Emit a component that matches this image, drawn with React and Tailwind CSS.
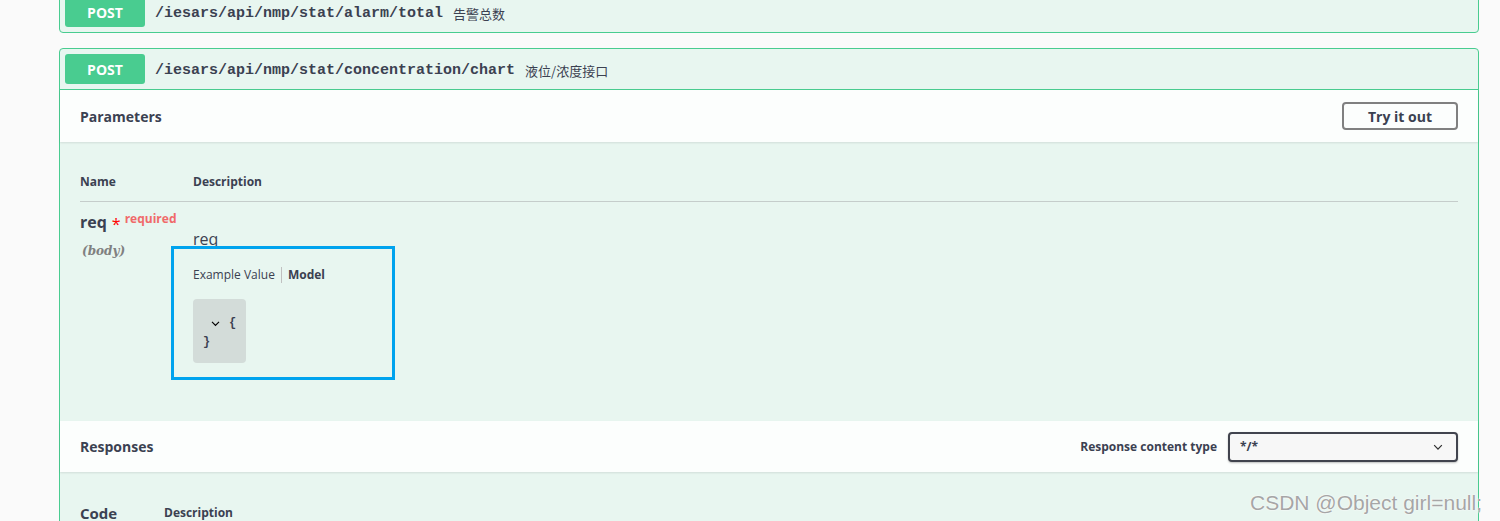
import React from "react";

const sans = { fontFamily: '"Open Sans", "Noto Sans CJK SC", sans-serif' };

function Chevron({ className }) {
  return (
    <svg viewBox="0 0 20 20" className={className} fill="currentColor">
      <path d="M4.3 6.3 10 12l5.7-5.7 1.4 1.4L10 14.8 2.9 7.7z" />
    </svg>
  );
}

function Summary({ path, desc }) {
  return (
    <div className="flex items-center p-[5px] h-[40px]">
      <span className="w-[80px] h-[30px] flex items-center justify-center rounded-[3px] bg-[#49cc90] text-white text-[14px] font-bold">
        POST
      </span>
      <span className="px-[10px] pt-[5px] text-[15px] font-semibold text-[#3b4151]" style={{ fontFamily: '"Liberation Mono", monospace' }}>
        {path}
      </span>
      <span className="pt-[4px] text-[13px] text-[#3b4151]" style={{ fontFamily: '"Noto Sans CJK SC", sans-serif' }}>
        {desc}
      </span>
    </div>
  );
}

export default function App() {
  return (
    <div className="relative w-[1500px] h-[521px] overflow-hidden bg-[#fafafa]" style={sans}>
      <div className="pl-[59px] pr-[21px] -mt-[9px]">
        <div className="border border-[#49cc90] rounded-[4px] bg-[#e8f6f0] mb-[15px]">
          <Summary path="/iesars/api/nmp/stat/alarm/total" desc="告警总数" />
        </div>

        <div className="border border-[#49cc90] rounded-[4px] bg-[#e8f6f0]">
          <div className="border-b border-[#49cc90]">
            <Summary path="/iesars/api/nmp/stat/concentration/chart" desc="液位/浓度接口" />
          </div>

          <div className="h-[52px] flex items-center justify-between px-[20px] bg-[#fcfefd] shadow-[0_1px_2px_rgba(0,0,0,0.1)]">
            <span className="text-[14px] font-bold text-[#3b4151]">Parameters</span>
            <button className="h-[28px] w-[116px] border-2 border-[#808080] rounded-[4px] bg-transparent text-[14px] font-bold text-[#3b4151]">
              Try it out
            </button>
          </div>

          <div className="px-[20px] pt-[20px] h-[279px]">
            <div className="flex items-center h-[40px] border-b border-[#c5cdcb] text-[12px] font-bold text-[#3b4151]">
              <span className="w-[113px]">Name</span>
              <span>Description</span>
            </div>
            <div className="flex">
              <div className="w-[113px] pt-[10px]">
                <div className="flex items-start text-[#3b4151]">
                  <span className="text-[16px] font-bold leading-[20px]">req</span>
                  <span className="ml-[5px] mt-[2px] text-[16px] leading-[20px] text-[#ff0000]">*</span>
                  <span className="ml-[4px] -mt-[1px] text-[12px] font-bold leading-[16px] text-[#f06a6a]">required</span>
                </div>
                <div className="mt-[8px] ml-[2px] text-[12px] italic font-bold text-[#808080]" style={{ fontFamily: '"DejaVu Serif", serif' }}>
                  (body)
                </div>
              </div>
              <div className="pt-[27px]">
                <div className="text-[16px] leading-[20px] text-[#3b4151]">req</div>
                <div className="mt-[18px] flex items-center text-[12px] leading-[16px] text-[#3b4151]">
                  <span>Example Value</span>
                  <span className="mx-[6px] h-[16px] w-px bg-[#c0c0c0]" />
                  <span className="font-bold">Model</span>
                </div>
                <div className="mt-[16px] w-[53px] h-[64px] rounded-[4px] bg-[#d3dcd9] pt-[14px] text-[12px] font-bold text-[#3b4151]" style={{ fontFamily: '"Liberation Mono", monospace' }}>
                  <div className="flex items-center pl-[17px] h-[20px]">
                    <Chevron className="w-[11px] h-[11px] text-black" />
                    <span className="ml-[8px]">{"{"}</span>
                  </div>
                  <div className="pl-[10px] h-[20px]">{"}"}</div>
                </div>
              </div>
            </div>
          </div>

          <div className="h-[51px] flex items-center justify-between pl-[20px] pr-[20px] bg-[#fcfefd] shadow-[0_1px_2px_rgba(0,0,0,0.1)]">
            <span className="text-[14px] font-bold text-[#3b4151]">Responses</span>
            <div className="flex items-center">
              <span className="text-[12px] font-bold text-[#3b4151] mr-[11px]">Response content type</span>
              <div className="w-[230px] h-[30px] border-2 border-[#41444e] rounded-[4px] bg-[#f7f7f7] flex items-center justify-between pl-[10px] pr-[12px] shadow-[0_1px_2px_rgba(0,0,0,0.25)]">
                <span className="text-[12px] font-bold text-[#3b4151]">*/*</span>
                <Chevron className="w-[12px] h-[12px] text-[#303030]" />
              </div>
            </div>
          </div>

          <div className="px-[20px] pt-[30px] h-[80px]">
            <div className="flex items-center text-[#3b4151] font-bold">
              <span className="w-[84px] text-[15px]">Code</span>
              <span className="text-[12px]">Description</span>
            </div>
          </div>
        </div>
      </div>

      <div className="absolute left-[171px] top-[246px] w-[224px] h-[134px] border-[3px] border-[#00a3ee]" />

      <div
        className="absolute left-[1250px] top-[487px] text-[21px] text-[#a6a6a6]"
        style={{ fontFamily: '"Liberation Sans", sans-serif', textShadow: "0 0 2px #ffffff, 0 0 1px #ffffff" }}
      >
        CSDN @Object girl=null;
      </div>
    </div>
  );
}
